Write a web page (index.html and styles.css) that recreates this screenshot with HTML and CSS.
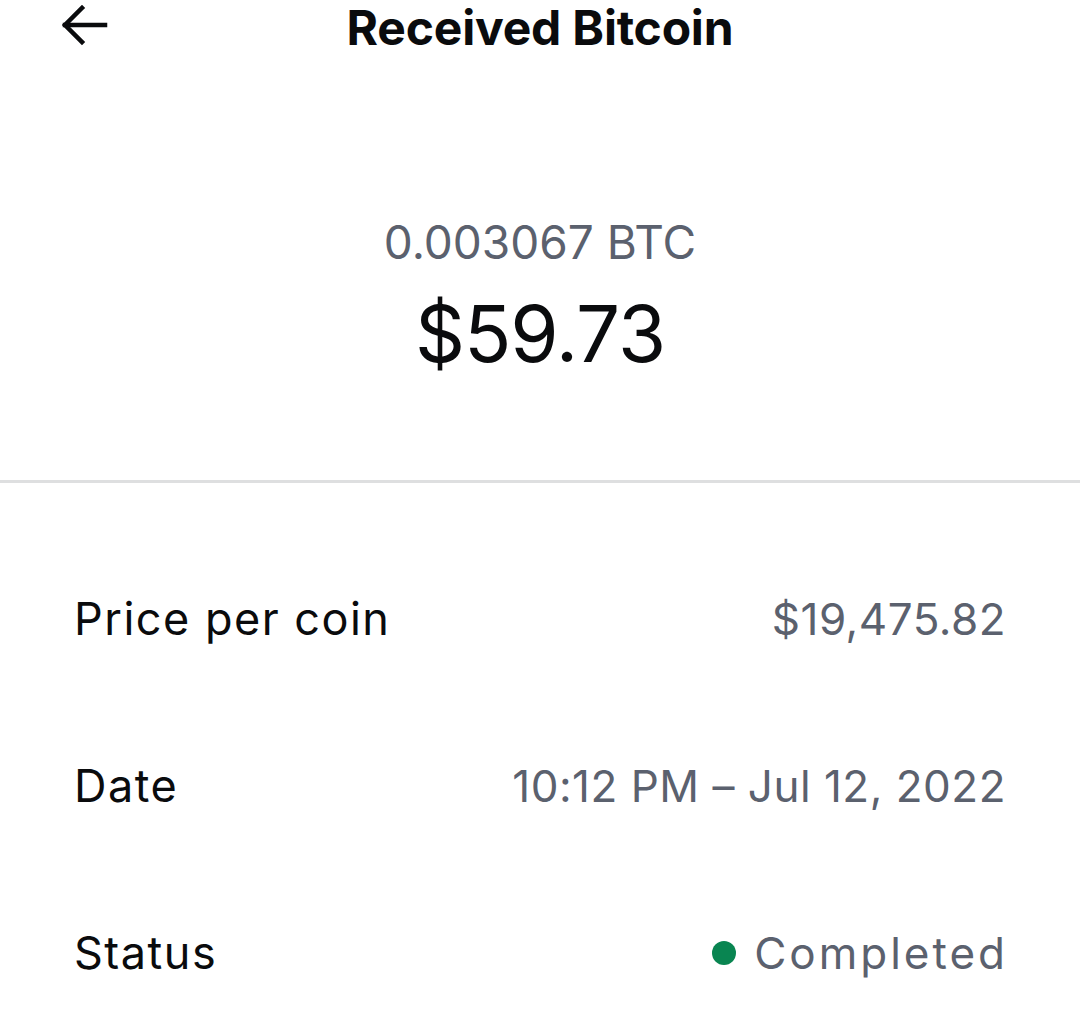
FILE: index.html
```html
<!DOCTYPE html>
<html lang="en">

<head>
  <meta charset="UTF-8" />
  <meta name="viewport" content="width=device-width, initial-scale=1.0" />
  <title>Received Bitcoin</title>
  <link rel="stylesheet" href="styles.css">
</head>

<body>
  <header class="top-bar">
    <button class="back-btn" aria-label="Back">
      <svg width="48" height="42" viewBox="0 0 48 42" fill="none" stroke="#0a0b0d" stroke-width="4.5" stroke-linecap="square">
        <path d="M5 21 H45" />
        <path d="M22 4 L5 21 L22 38" />
      </svg>
    </button>
    <h1>Received Bitcoin</h1>
  </header>

  <section class="amount">
    <div class="crypto">0.003067 BTC</div>
    <div class="fiat">$59.73</div>
  </section>

  <div class="divider"></div>

  <section class="details">
    <div class="row">
      <span class="label">Price per coin</span>
      <span class="value">$19,475.82</span>
    </div>
    <div class="row">
      <span class="label">Date</span>
      <span class="value">10:12 PM – Jul 12, 2022</span>
    </div>
    <div class="row">
      <span class="label">Status</span>
      <span class="value"><span class="dot"></span><span class="status">Completed</span></span>
    </div>
  </section>
</body>

</html>
```

FILE: styles.css
```css
:root {
  --text: #0a0b0d;
  --muted: #5b616e;
  --green: #098551;
  --line: #dedfe0;
}

* {
  margin: 0;
  padding: 0;
  box-sizing: border-box;
  font-family: Inter, 'Noto Sans', sans-serif;
}

body {
  background: #fff;
  color: var(--text);
  width: 1080px;
  height: 1014px;
  overflow: hidden;
}

.top-bar {
  position: relative;
  height: 58px;
  display: flex;
  align-items: flex-start;
  justify-content: center;
}

.top-bar h1 {
  font-size: 48px;
  font-weight: 700;
  line-height: 58px;
  margin-top: -1px;
  letter-spacing: -0.2px;
}

.back-btn {
  position: absolute;
  left: 60px;
  top: 4px;
  background: none;
  border: none;
  display: flex;
}

.amount {
  padding: 156px 0 98px;
  display: flex;
  flex-direction: column;
  align-items: center;
  gap: 16px;
}

.crypto {
  font-size: 46px;
  line-height: 56px;
  color: var(--muted);
}

.fiat {
  font-size: 78px;
  line-height: 96px;
  letter-spacing: -1px;
}

.divider {
  height: 3px;
  background: var(--line);
}

.details {
  padding: 52px 74px 0;
}

.row {
  height: 167px;
  display: flex;
  align-items: center;
  justify-content: space-between;
  font-size: 44px;
  line-height: 56px;
}

.label {
  font-size: 45px;
  letter-spacing: 1.5px;
}

.value {
  color: var(--muted);
  display: flex;
  align-items: center;
  letter-spacing: 0.5px;
}

.status {
  letter-spacing: 3px;
  margin-right: -2px;
}

.dot {
  width: 24px;
  height: 24px;
  border-radius: 50%;
  background: var(--green);
  margin-right: 18px;
}
```
